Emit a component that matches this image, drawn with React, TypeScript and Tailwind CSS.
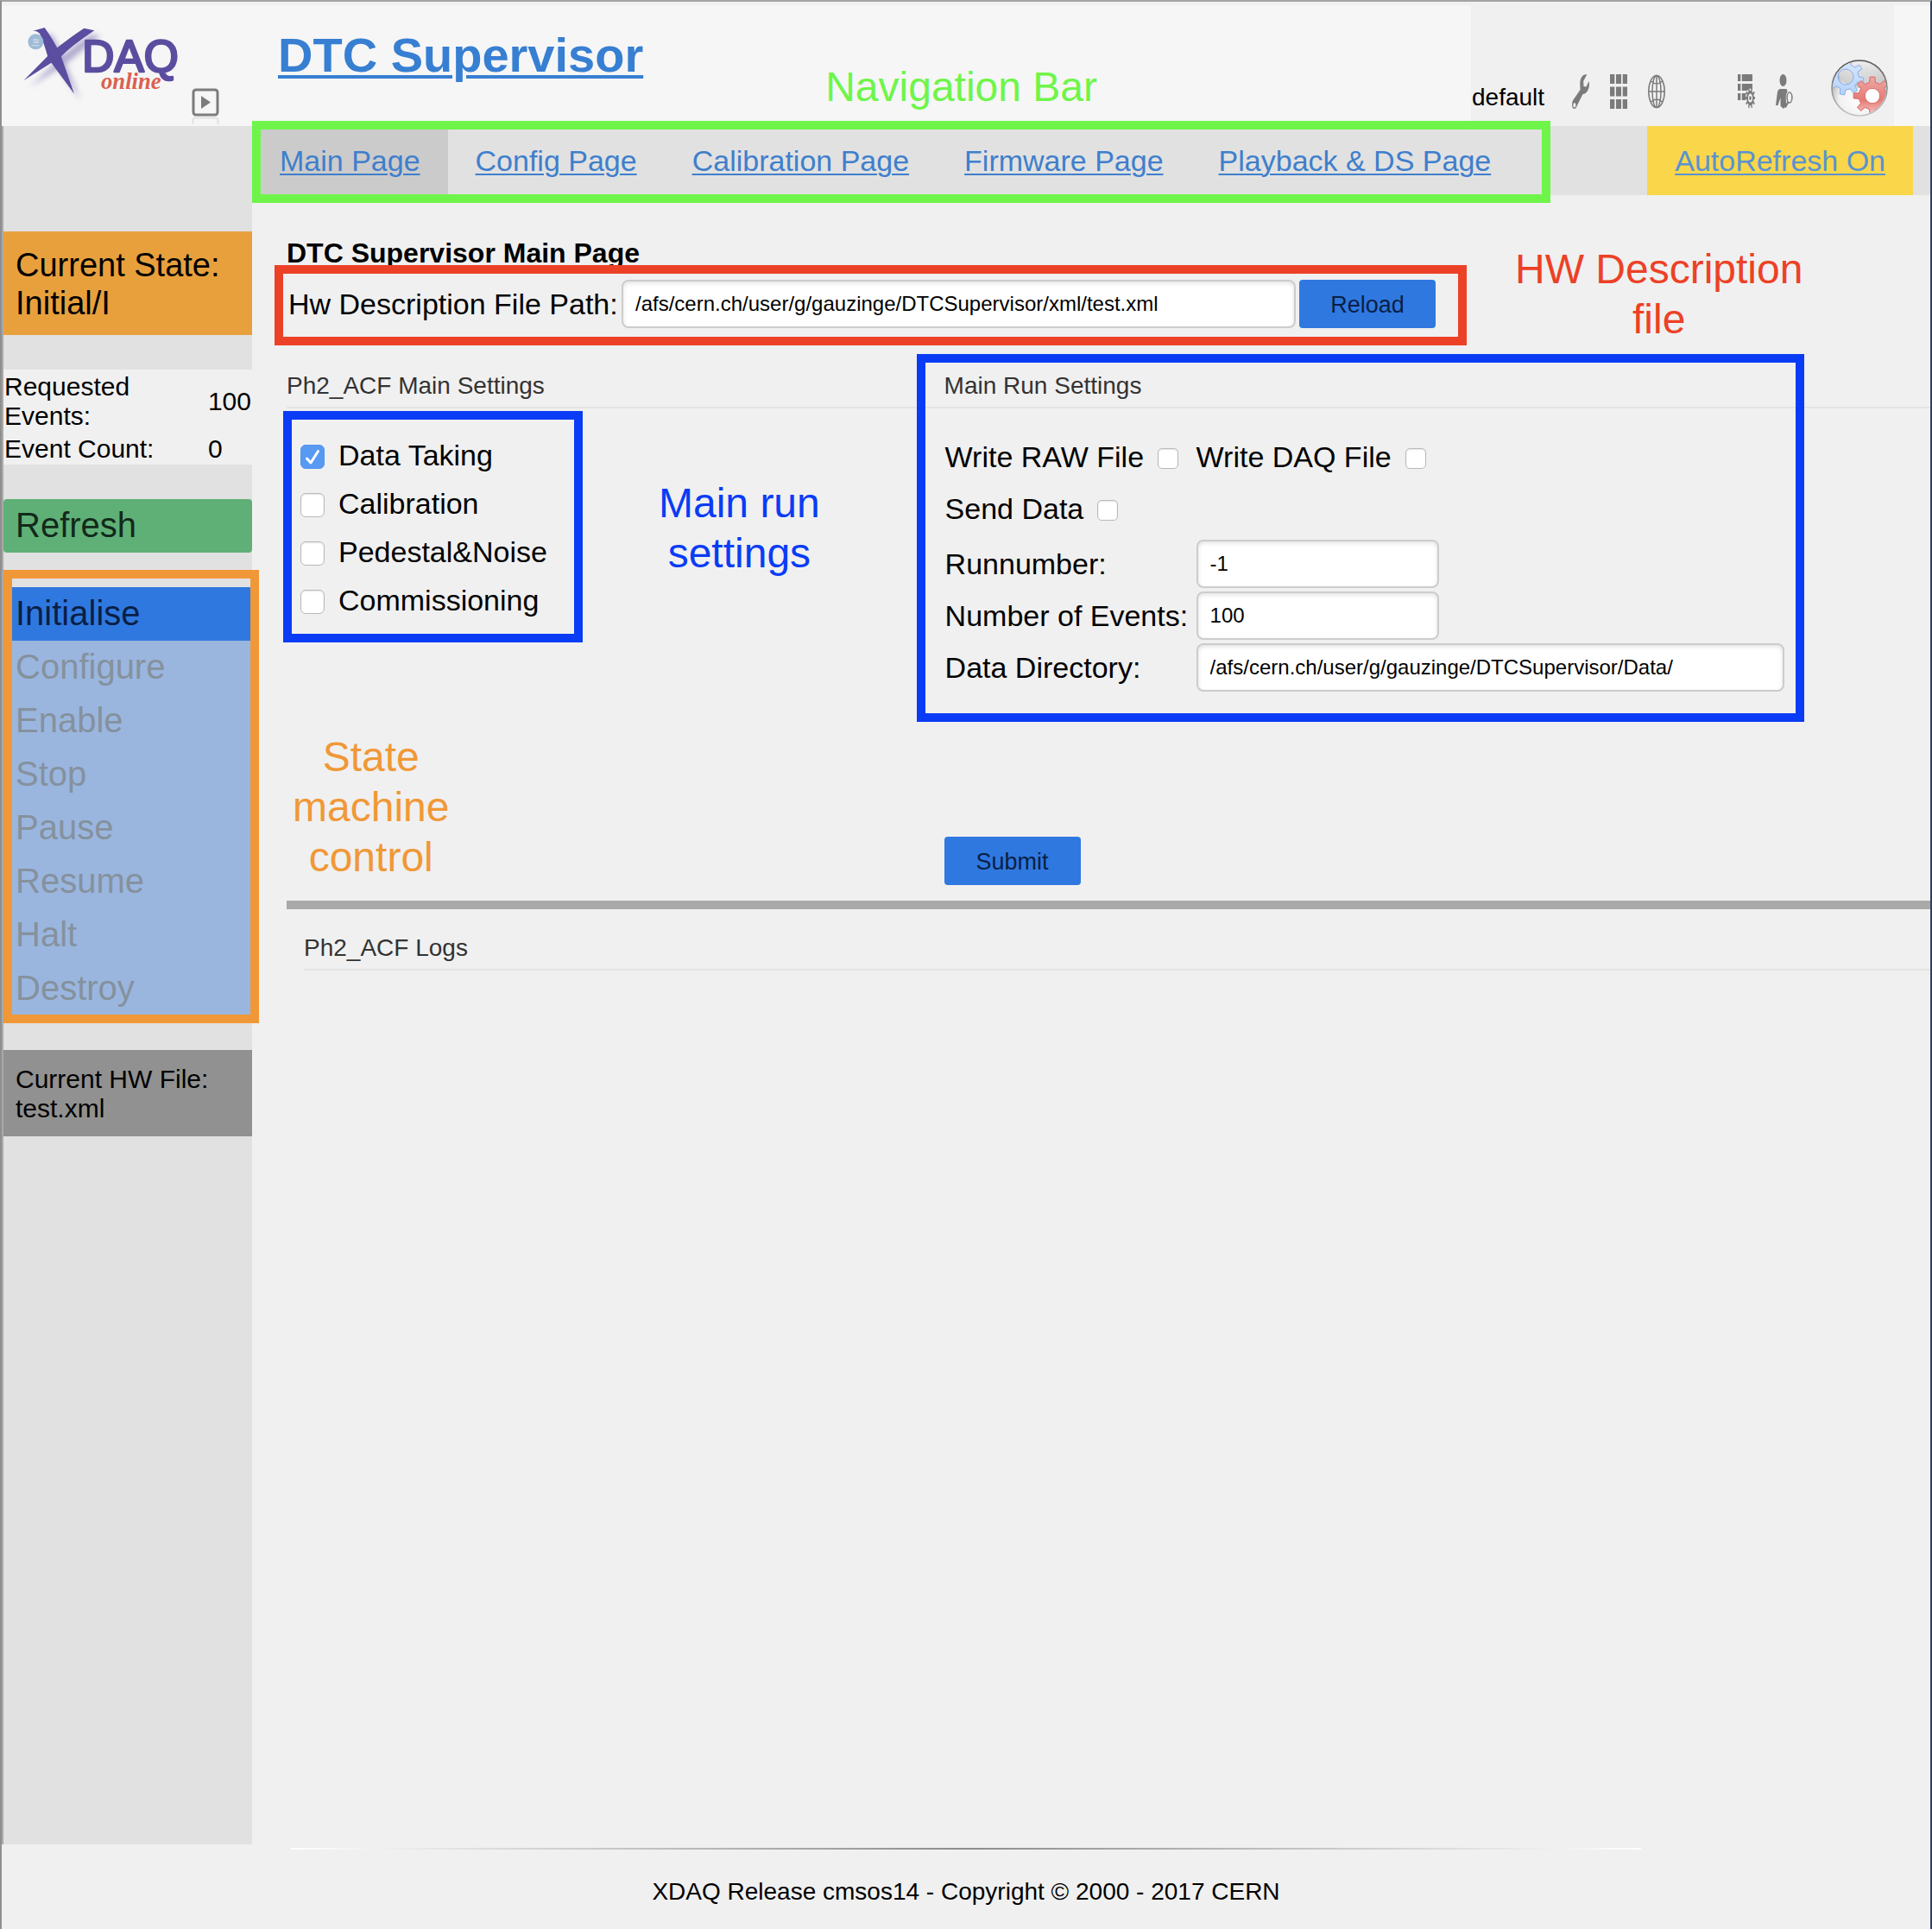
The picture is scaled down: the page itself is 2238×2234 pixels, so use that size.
import React, { useId, useState } from "react";

const NAV_PAGES = ["Main Page", "Config Page", "Calibration Page", "Firmware Page", "Playback & DS Page"];
const TRANSITIONS = ["Initialise", "Configure", "Enable", "Stop", "Pause", "Resume", "Halt", "Destroy"];
const PROCEDURES = ["Data Taking", "Calibration", "Pedestal&Noise", "Commissioning"];

function gearPath(cx: number, cy: number, outer: number, inner: number, hole: number, teeth: number, turn = 0) {
  const step = (Math.PI * 2) / teeth;
  const at = (r: number, a: number) => `${(cx + r * Math.cos(a)).toFixed(2)} ${(cy + r * Math.sin(a)).toFixed(2)}`;
  let d = "";
  for (let i = 0; i < teeth; i++) {
    const a = turn + i * step;
    d += `${i ? "L" : "M"}${at(inner, a - step * 0.27)}L${at(outer, a - step * 0.17)}L${at(outer, a + step * 0.17)}L${at(inner, a + step * 0.27)}`;
  }
  return `${d}ZM${cx + hole} ${cy}A${hole} ${hole} 0 1 0 ${cx - hole} ${cy}A${hole} ${hole} 0 1 0 ${cx + hole} ${cy}Z`;
}

function Logo() {
  return (
    <svg className="mt-[18px] h-[124px] w-[200px] shrink-0 overflow-visible" viewBox="0 0 600 372" role="img" aria-label="XDAQ online">
      <defs>
        <filter id="soft" x="-20%" y="-20%" width="150%" height="150%">
          <feGaussianBlur stdDeviation="9" />
        </filter>
      </defs>
      <g fill="#5a4b9c" opacity="0.45" filter="url(#soft)" transform="translate(22 22)">
        <path d="M52 48L95 36Q122 76 142 130L198 266L118 150Q92 80 80 50Z" />
        <path d="M268 44L232 38Q180 72 128 118L22 220L150 138Q190 102 268 44Z" />
      </g>
      <g fill="#5b4d9f">
        <path d="M52 48L95 36Q124 76 150 128L198 266L108 144Q92 86 78 56Q66 44 52 48Z" />
        <path d="M268 46L232 38Q180 72 118 122L22 220L150 138Q190 98 268 46Z" />
      </g>
      <circle cx="64" cy="85" r="27" fill="#9dbbd6" />
      <text x="64" y="89" textAnchor="middle" fontSize="23" fill="#e6f0f7" fontFamily="Liberation Sans, sans-serif">Si</text>
      <path d="M50 98H77" stroke="#c3d7e6" strokeWidth="4" />
      <text
        x="226"
        y="189"
        fontSize="154"
        fill="#5b4d9f"
        stroke="#5b4d9f"
        strokeWidth="8"
        strokeLinejoin="round"
        fontFamily="Liberation Sans, sans-serif"
      >
        DAQ
      </text>
      <text x="291" y="250" fontSize="80" fontWeight="bold" fontStyle="italic" fill="#db604f" fontFamily="Liberation Serif, serif">
        online
      </text>
    </svg>
  );
}

function PlayButton() {
  return (
    <button type="button" aria-label="Toggle sidebar" className="mt-[100px] ml-[2px] h-11 w-8 shrink-0">
      <svg viewBox="0 0 32 44" className="h-11 w-8">
        <rect x="2" y="2" width="28" height="29" rx="3" fill="none" stroke="#7c7c7c" strokeWidth="3" />
        <path d="M11 9V24L22 16.500Z" fill="#7c7c7c" />
        <path d="M1.500 42V37Q1.500 34.500 4 34.500H28Q30.500 34.500 30.500 37V42" fill="none" stroke="#e2e2e2" strokeWidth="2" />
      </svg>
    </button>
  );
}

function IconLink({ label, className = "", children }: { label: string; className?: string; children: React.ReactNode }) {
  return (
    <a href="#" aria-label={label} className={`block h-10 w-5 ${className}`}>
      <svg viewBox="0 0 20 40" className="h-10 w-5" fill="#7b7b7b">
        {children}
      </svg>
    </a>
  );
}

function HeaderIcons() {
  return (
    <div className="flex items-start pt-20">
      <IconLink label="Configure" className="ml-8">
        <path
          fillRule="evenodd"
          d="M17 0C12 0 9 5 9.300 12L9.500 18L1.200 30C-.8 34-.2 40 2.500 40C4.500 40 5.200 38 6 36L12.500 23C17 23 20 17 20 11L19.500 8L16.500 14.500L13.500 14L13.200 8L16.800 1ZM2.900 33A1.500 2.800 0 1 1 2.800 33Z"
        />
      </IconLink>
      <IconLink label="Applications" className="ml-6">
        <path d="M0 0H5.300V11H0ZM7 0H13V11H7ZM14.700 0H20V11H14.700ZM0 14.500H5.300V25.500H0ZM7 14.500H13V25.500H7ZM14.700 14.500H20V25.500H14.700ZM0 29H5.300V40H0ZM7 29H13V40H7ZM14.700 29H20V40H14.700Z" />
      </IconLink>
      <IconLink label="Network" className="ml-6">
        <g fill="none" stroke="#7b7b7b" strokeWidth="1.500">
          <ellipse cx="10" cy="20" rx="9.200" ry="18.500" />
          <ellipse cx="10" cy="20" rx="5" ry="18.500" />
          <path d="M10 1.500V38.500M.8 20H19.200M3.500 8Q10 14 16.500 8M3.500 32Q10 26 16.500 32" />
        </g>
      </IconLink>
      <IconLink label="Services" className="ml-[84px]">
        <path d="M0 0H3.300V8H0ZM4.800 0H17V8H4.800ZM0 11H3.300V19H0ZM4.800 11H17V19H4.800ZM0 22H3.300V30H0ZM4.800 22H10V30H4.800Z" />
        <g transform="translate(14.500 27.500) scale(.5 1)">
          <circle r="11" fill="#f0f0f0" />
          <path fillRule="evenodd" d={gearPath(0, 0, 12, 8.5, 5, 10)} />
          <circle r="2.500" />
        </g>
      </IconLink>
      <IconLink label="Users" className="ml-6">
        <ellipse cx="8.500" cy="7" rx="4" ry="7" />
        <path d="M5 17H12Q13.500 17.500 13.500 20Q11 24 12 31L12.500 36L9 40L8 39L5.500 37L5.500 27L2.500 36H0L1.500 24Q2 17 5 17Z" />
        <ellipse cx="16" cy="27" rx="2.900" ry="6" fill="none" stroke="#7b7b7b" strokeWidth="1.500" />
        <path d="M14.500 32L11 38.500" stroke="#7b7b7b" strokeWidth="2" />
      </IconLink>
    </div>
  );
}

function GearsBall() {
  return (
    <a href="#" aria-label="XDAQ" className="mt-[62px] ml-[43px] block size-[68px]">
      <svg viewBox="0 0 68 68" className="size-[68px]">
        <defs>
          <radialGradient id="ball" cx="50%" cy="70%" r="62%">
            <stop offset="0" stopColor="#ffffff" />
            <stop offset="0.600" stopColor="#f0f0f0" />
            <stop offset="1" stopColor="#a0a0a0" />
          </radialGradient>
          <linearGradient id="gloss" x1="0" y1="0" x2="0" y2="1">
            <stop offset="0" stopColor="#ffffff" stopOpacity="0.900" />
            <stop offset="1" stopColor="#bcbcbc" stopOpacity="0.800" />
          </linearGradient>
          <linearGradient id="rim" x1="0" y1="0" x2="0" y2="1">
            <stop offset="0" stopColor="#555555" />
            <stop offset="1" stopColor="#c4c4c4" />
          </linearGradient>
          <linearGradient id="blue" x1="0" y1="0" x2="0" y2="1">
            <stop offset="0" stopColor="#dbe8fb" />
            <stop offset="1" stopColor="#b4d2fb" />
          </linearGradient>
          <linearGradient id="red" x1="0" y1="0" x2="0" y2="1">
            <stop offset="0" stopColor="#ecaaa6" />
            <stop offset="0.600" stopColor="#e57b75" />
            <stop offset="1" stopColor="#f6c4c1" />
          </linearGradient>
          <clipPath id="round">
            <circle cx="34" cy="34" r="31" />
          </clipPath>
        </defs>
        <circle cx="34" cy="34" r="32" fill="url(#ball)" stroke="url(#rim)" strokeWidth="1.500" />
        <g clipPath="url(#round)">
          <ellipse cx="38" cy="17" rx="28" ry="17" fill="url(#gloss)" />
          <path fillRule="evenodd" d={gearPath(18, 21, 21, 15, 9, 8, 0.2)} fill="url(#blue)" stroke="#86aeec" strokeWidth="1" strokeLinejoin="round" />
          <path fillRule="evenodd" d={gearPath(49, 43, 22, 16, 8.5, 8, 0)} fill="url(#red)" stroke="#da6661" strokeWidth="1" strokeLinejoin="round" />
          <circle cx="49" cy="43" r="8" fill="#ffffff" />
        </g>
      </svg>
    </a>
  );
}

function Tick({ label, small = false, before = false, checked = false }: { label: string; small?: boolean; before?: boolean; checked?: boolean }) {
  const id = useId();
  const box = (
    <span className={before ? "relative mt-[14px] block size-7 shrink-0" : "relative mt-1 block size-6 shrink-0"}>
      <input
        id={id}
        type="checkbox"
        defaultChecked={checked}
        className={`peer block appearance-none border border-[#b9b9b9] bg-white shadow-[inset_0_1px_2px_#e4e4e4] checked:border-[#5094ef] checked:bg-[#5899f2] checked:shadow-none ${
          small ? "size-6 rounded-[5px]" : "size-7 rounded-[6px]"
        }`}
      />
      <svg viewBox="0 0 28 28" className="pointer-events-none absolute inset-0 hidden peer-checked:block" fill="none" stroke="#ffffff" strokeWidth="3" strokeLinecap="round" strokeLinejoin="round">
        <path d="M7.500 16L12 21L20.500 7.500" />
      </svg>
    </span>
  );
  return before ? (
    <div className="flex h-14 items-start gap-4">
      {box}
      <label htmlFor={id} className="text-[34px] leading-[52px]">{label}</label>
    </div>
  ) : (
    <div className="flex h-[60px] items-center gap-4">
      <label htmlFor={id} className="text-[34px] leading-10 whitespace-nowrap">{label}</label>
      {box}
    </div>
  );
}

const INPUT =
  "h-14 max-w-full rounded-[8px] border-2 border-[#cccccc] bg-white px-[14px] text-[24px] text-black shadow-[inset_0_2px_5px_#e2e2e2] outline-none";
const BUTTON = "h-14 w-[158px] rounded-[4px] bg-[#2f78e0] pt-[2px] text-[27px] text-[#0a1f45]";

function Field({ label, value, wide = false }: { label: string; value: string; wide?: boolean }) {
  const id = useId();
  return (
    <>
      <label htmlFor={id} className="text-[34px] leading-10 whitespace-nowrap">{label}</label>
      <div className="flex h-[60px] items-center">
        <input id={id} type="text" defaultValue={value} className={`${INPUT} ${wide ? "w-[681px]" : "w-[281px]"}`} />
      </div>
    </>
  );
}

function SectionTitle({ children }: { children: React.ReactNode }) {
  return <h3 className="border-b-2 border-[#e4e4e4] pt-px pb-1 text-[28px] leading-10 text-[#333333]">{children}</h3>;
}

function Sidebar() {
  return (
    <aside className="flex w-[290px] shrink-0 flex-col gap-10 border-l-2 border-[#a9a9a9] bg-[#e1e1e1] pt-[122px]">
      <div className="bg-[#e8a03d] px-[14px] pt-[17px] pb-[15px] text-[38px] leading-[44px]">
        Current State:
        <br />
        Initial/I
      </div>
      <table className="w-full bg-[#f0f0f0] text-left text-[30px] leading-[34px]">
        <tbody>
          <tr>
            <th scope="row" className="pt-[3px] pr-10 pb-px pl-px font-normal">Requested Events:</th>
            <td className="pt-[3px] pr-px pb-px">100</td>
          </tr>
          <tr>
            <th scope="row" className="pt-[3px] pb-px pl-px font-normal">Event Count:</th>
            <td className="pt-[3px] pb-px">0</td>
          </tr>
        </tbody>
      </table>
      <button type="button" className="h-[62px] rounded-[4px] bg-[#5fb077] px-[14px] pb-[2px] text-left text-[40px] text-[#13291a]">
        Refresh
      </button>
      <div className="relative flex flex-col">
        {TRANSITIONS.map((name, i) => (
          <button
            key={name}
            type="button"
            disabled={i > 0}
            className="h-[62px] bg-[#2f78e0] px-[14px] pb-[2px] text-left text-[40px] text-[#0a1f45] disabled:bg-[#9ab6df] disabled:text-[#85919d]"
          >
            {name}
          </button>
        ))}
        <div className="pointer-events-none absolute -top-5 -right-2 -bottom-[9px] left-0 border-10 border-[#f09837]" />
      </div>
      <div className="bg-[#919191] px-[14px] pt-[17px] pb-[15px] text-[30px] leading-[34px]">
        Current HW File:
        <br />
        test.xml
      </div>
    </aside>
  );
}

function NavBar() {
  const [auto, setAuto] = useState(true);
  return (
    <nav className="flex justify-between bg-[#e1e1e1] pr-5 text-[34px] leading-10 text-[#3f7fcc]">
      <ul className="relative flex">
        {NAV_PAGES.map((page, i) => (
          <li key={page} className={i === 0 ? "bg-[#cbcbcb]" : ""}>
            <a href="#" className="block px-8 py-5 whitespace-nowrap underline decoration-2 underline-offset-3">{page}</a>
          </li>
        ))}
        <li aria-hidden="true" className="pointer-events-none absolute -top-[6px] -right-[37px] -bottom-[9px] left-0 border-10 border-[#6ff54a]" />
      </ul>
      <a
        href="#"
        onClick={() => setAuto(!auto)}
        className="block bg-[#f9d64a] px-8 py-5 whitespace-nowrap text-[#5a93cf] underline decoration-2 underline-offset-3"
      >
        {auto ? "AutoRefresh On" : "AutoRefresh Off"}
      </a>
    </nav>
  );
}

export default function App() {
  return (
    <div className="flex min-h-screen flex-col border-t-2 border-r-2 border-l-2 border-t-[#a5a3a5] border-r-[#34405a] border-l-[#8f8f8f] bg-[#f0f0f0] font-['Liberation_Sans',Arial,sans-serif] text-black">
      <header className="flex h-36 items-start border-t-4 border-[#f0f0f0] bg-[#f6f6f6]">
        <div className="-mt-1 flex w-[320px] shrink-0 items-start pl-[18px]">
          <Logo />
          <PlayButton />
        </div>
        <h1 className="mt-[26px] text-[56px] leading-[64px] font-bold whitespace-nowrap text-[#377fd2]">
          <a href="#" className="underline decoration-4 underline-offset-4">DTC Supervisor</a>
        </h1>
        <p className="mt-[66px] ml-[211px] text-[48px] leading-[58px] whitespace-nowrap text-[#6ff54a]">Navigation Bar</p>
        <div className="mr-[42px] ml-auto flex h-[140px] w-[490px] shrink-0 items-start bg-[#f0f0f0] pl-px">
          <span className="mt-[87px] text-[28px] leading-10">default</span>
          <HeaderIcons />
          <GearsBall />
        </div>
      </header>

      <div className="flex flex-1">
        <Sidebar />
        <div className="min-w-0 flex-1">
          <NavBar />
          <main className="pt-[47px] pl-10">
            <h2 className="text-[32px] leading-10 font-bold">DTC Supervisor Main Page</h2>
            <form className="relative mt-[11px] flex w-fit items-center gap-1" onSubmit={(e) => e.preventDefault()}>
              <label htmlFor="hw-path" className="w-[384px] pl-[2px] text-[34px] leading-10 whitespace-nowrap">
                Hw Description File Path:
              </label>
              <input id="hw-path" type="text" defaultValue="/afs/cern.ch/user/g/gauzinge/DTCSupervisor/xml/test.xml" className={`${INPUT} w-[781px]`} />
              <button type="submit" className={BUTTON}>Reload</button>
              <div className="pointer-events-none absolute -top-[17px] -right-9 -bottom-5 -left-[14px] border-10 border-[#ec4126]" />
              <p className="absolute -top-[41px] left-full ml-[92px] text-center text-[48px] leading-[58px] whitespace-nowrap text-[#ec4126]">
                HW Description
                <br />
                file
              </p>
            </form>

            <form className="mt-[46px] grid grid-cols-[2fr_3fr]" onSubmit={(e) => e.preventDefault()}>
              <section>
                <SectionTitle>Ph2_ACF Main Settings</SectionTitle>
                <div className="flex items-start">
                  <div className="relative w-[343px] pt-7 pl-4">
                    {PROCEDURES.map((name, i) => (
                      <Tick key={name} label={name} before checked={i === 0} />
                    ))}
                    <div className="pointer-events-none absolute top-[3px] right-0 -bottom-[19px] -left-1 border-10 border-[#0a3cf5]" />
                  </div>
                  <p className="mt-[81px] ml-[88px] text-center text-[48px] leading-[58px] text-[#0a3cf5]">
                    Main run
                    <br />
                    settings
                  </p>
                </div>
                <p className="mt-[123px] ml-[7px] w-fit text-center text-[48px] leading-[58px] text-[#f09837]">
                  State
                  <br />
                  machine
                  <br />
                  control
                </p>
              </section>

              <section>
                <SectionTitle>Main Run Settings</SectionTitle>
                <div className="relative w-fit pt-[26px] pl-px">
                  <div className="grid grid-cols-[291px_auto]">
                    <Tick label="Write RAW File" small />
                    <Tick label="Write DAQ File" small />
                    <Tick label="Send Data" small />
                  </div>
                  <div className="mt-1 grid grid-cols-[291px_auto] items-center">
                    <Field label="Runnumber:" value="-1" />
                    <Field label="Number of Events:" value="100" />
                    <Field label="Data Directory:" value="/afs/cern.ch/user/g/gauzinge/DTCSupervisor/Data/" wide />
                  </div>
                  <div className="pointer-events-none absolute -top-[63px] -right-[23px] -bottom-[33px] -left-8 border-10 border-[#0a3cf5]" />
                </div>
                <button type="submit" className={`${BUTTON} mt-[166px]`}>Submit</button>
              </section>
            </form>

            <section className="mt-[18px] border-t-10 border-[#a9a9a9] pt-6 pl-5">
              <SectionTitle>Ph2_ACF Logs</SectionTitle>
            </section>
          </main>
        </div>
      </div>

      <footer className="pt-1 pb-[23px] text-center text-[28px] leading-10">
        <div className="mx-auto h-[2px] w-[70%] bg-linear-to-r from-white via-[#8c8c8c] to-white" />
        <p className="mt-[29px]">XDAQ Release cmsos14 - Copyright © 2000 - 2017 CERN</p>
      </footer>
    </div>
  );
}
